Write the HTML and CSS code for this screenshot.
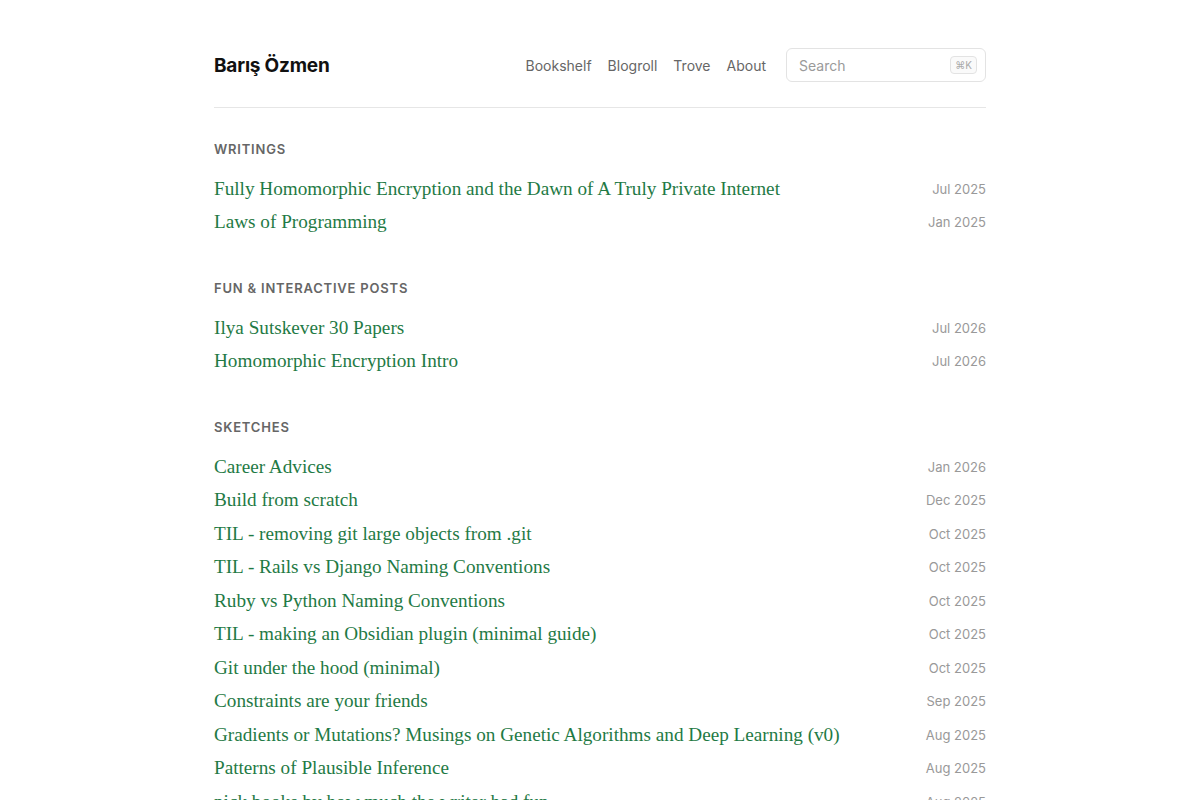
FILE: index.html
```html
<!DOCTYPE html>
<html lang="en">
<head>
    <meta charset="UTF-8">
    <meta name="viewport" content="width=device-width, initial-scale=1.0">
    <title>Barış Özmen</title>
    <link rel="stylesheet" href="styles.css">
</head>
<body>
    <div class="page">
        <header class="site-header">
            <a class="site-title" href="#">Barış Özmen</a>
            <nav class="site-nav">
                <a href="#">Bookshelf</a>
                <a href="#">Blogroll</a>
                <a href="#">Trove</a>
                <a href="#">About</a>
            </nav>
            <div class="search">
                <span class="search-placeholder">Search</span>
                <kbd class="search-key">⌘K</kbd>
            </div>
        </header>

        <!-- Writings -->
        <section class="section">
            <h2 class="section-title">Writings</h2>
            <ul class="posts">
                <li class="post"><a href="#">Fully Homomorphic Encryption and the Dawn of A Truly Private Internet</a><span class="date">Jul 2025</span></li>
                <li class="post"><a href="#">Laws of Programming</a><span class="date">Jan 2025</span></li>
            </ul>
        </section>

        <!-- Interactive -->
        <section class="section">
            <h2 class="section-title">Fun &amp; Interactive Posts</h2>
            <ul class="posts">
                <li class="post"><a href="#">Ilya Sutskever 30 Papers</a><span class="date">Jul 2026</span></li>
                <li class="post"><a href="#">Homomorphic Encryption Intro</a><span class="date">Jul 2026</span></li>
            </ul>
        </section>

        <!-- Sketches -->
        <section class="section">
            <h2 class="section-title">Sketches</h2>
            <ul class="posts">
                <li class="post"><a href="#">Career Advices</a><span class="date">Jan 2026</span></li>
                <li class="post"><a href="#">Build from scratch</a><span class="date">Dec 2025</span></li>
                <li class="post"><a href="#">TIL - removing git large objects from .git</a><span class="date">Oct 2025</span></li>
                <li class="post"><a href="#">TIL - Rails vs Django Naming Conventions</a><span class="date">Oct 2025</span></li>
                <li class="post"><a href="#">Ruby vs Python Naming Conventions</a><span class="date">Oct 2025</span></li>
                <li class="post"><a href="#">TIL - making an Obsidian plugin (minimal guide)</a><span class="date">Oct 2025</span></li>
                <li class="post"><a href="#">Git under the hood (minimal)</a><span class="date">Oct 2025</span></li>
                <li class="post"><a href="#">Constraints are your friends</a><span class="date">Sep 2025</span></li>
                <li class="post"><a href="#">Gradients or Mutations? Musings on Genetic Algorithms and Deep Learning (v0)</a><span class="date">Aug 2025</span></li>
                <li class="post"><a href="#">Patterns of Plausible Inference</a><span class="date">Aug 2025</span></li>
                <li class="post"><a href="#">pick books by how much the writer had fun</a><span class="date">Aug 2025</span></li>
            </ul>
        </section>
    </div>
</body>
</html>
```

FILE: styles.css
```css
body {
    margin: 0;
    padding: 0;
    background-color: #fff;
    font-family: Inter, "Noto Sans", sans-serif;
    color: #222;
}

a {
    text-decoration: none;
}

.page {
    width: 772px;
    margin: 0 auto;
    padding-top: 48px;
}

.site-header {
    display: flex;
    align-items: center;
    height: 34px;
    padding-bottom: 25px;
    border-bottom: 1px solid #e6e6e6;
}

.site-title {
    font-size: 19px;
    font-weight: 700;
    color: #111;
    letter-spacing: -0.2px;
    margin-right: auto;
}

.site-nav {
    display: flex;
    gap: 16px;
    margin-right: 20px;
}

.site-nav a {
    font-size: 14px;
    color: #666;
}

.search {
    box-sizing: border-box;
    width: 200px;
    height: 34px;
    border: 1px solid #e3e3e3;
    border-radius: 6px;
    display: flex;
    align-items: center;
    justify-content: space-between;
    padding: 0 8px 0 12px;
}

.search-placeholder {
    font-size: 14px;
    color: #9a9a9a;
}

.search-key {
    font-family: Inter, sans-serif;
    font-size: 10px;
    color: #aaa;
    border: 1px solid #e3e3e3;
    background-color: #fafafa;
    border-radius: 4px;
    padding: 2px 4px;
    line-height: 12px;
}

.section {
    padding-top: 31px;
    margin-bottom: 8px;
}

.section-title {
    margin: 0 0 13px;
    font-size: 13px;
    font-weight: 600;
    line-height: 20px;
    letter-spacing: 0.8px;
    text-transform: uppercase;
    color: #666;
}

.posts {
    list-style: none;
    margin: 0;
    padding: 0;
}

.post {
    display: flex;
    justify-content: space-between;
    align-items: center;
    height: 33.5px;
}

.post a {
    font-family: "Liberation Serif", "DejaVu Serif", serif;
    font-size: 19.2px;
    line-height: 24px;
    color: #1f7a45;
}

.date {
    font-size: 13px;
    line-height: 16px;
    color: #999;
    white-space: nowrap;
}
```
